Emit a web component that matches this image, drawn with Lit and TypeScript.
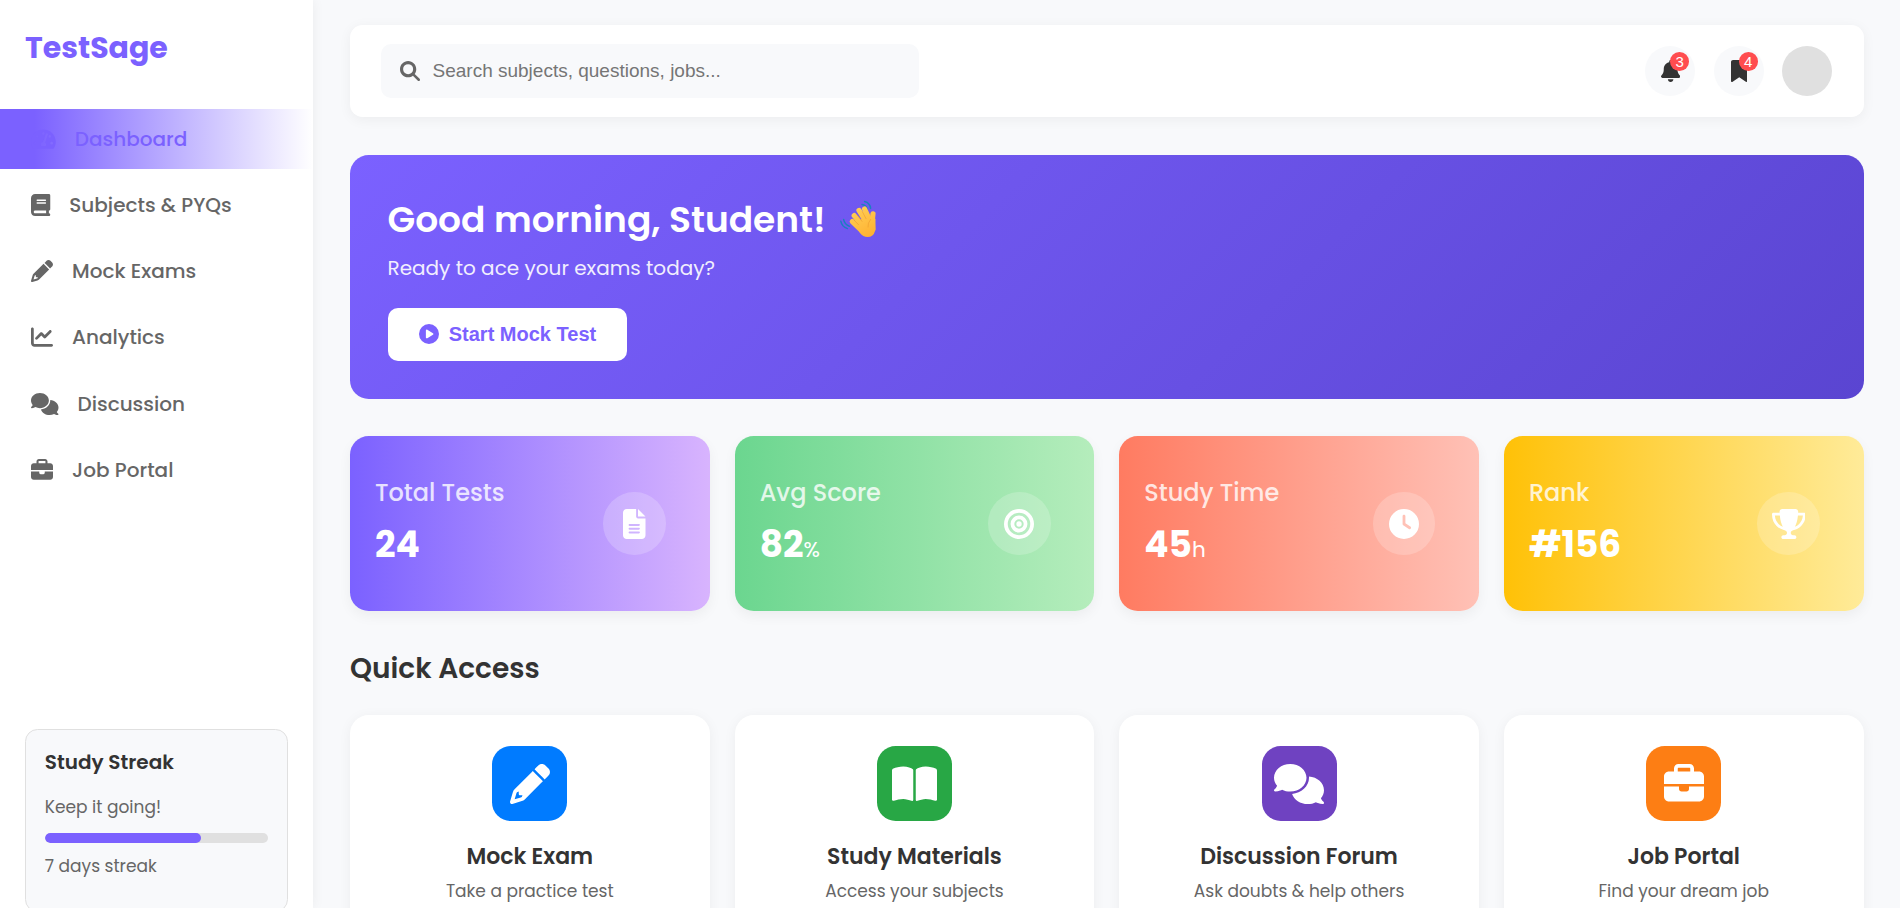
import { LitElement, html, css } from "lit";
import { customElement, property } from "lit/decorators.js";
import { classMap } from "lit/directives/class-map.js";

// Glyph outlines on a 512-unit-high grid: [width, path data]
const GLYPHS: Record<string, [number, string]> = {
  gauge: [576, "M288 32C128.94 32 0 160.94 0 320c0 52.8 14.25 102.26 39.06 144.8 5.61 9.62 16.3 15.2 27.44 15.2h443c11.14 0 21.83-5.58 27.44-15.2C561.75 422.26 576 372.8 576 320c0-159.06-128.94-288-288-288zm0 64c14.71 0 26.58 10.13 30.32 23.65-1.11 2.26-2.64 4.23-3.45 6.67l-9.22 27.67c-5.13 3.49-10.97 6.01-17.64 6.01-17.67 0-32-14.33-32-32S270.33 96 288 96zM96 384c-17.67 0-32-14.33-32-32s14.33-32 32-32 32 14.33 32 32-14.33 32-32 32zm48-160c-17.67 0-32-14.33-32-32s14.33-32 32-32 32 14.33 32 32-14.33 32-32 32zm246.77-72.41l-61.33 184C343.13 347.33 352 364.54 352 384c0 11.72-3.38 22.55-8.88 32H232.88c-5.5-9.45-8.88-20.28-8.88-32 0-33.94 26.5-61.43 59.9-63.59l61.34-184.01c4.17-12.56 17.73-19.45 30.36-15.17 12.57 4.19 19.35 17.79 15.17 30.36zm14.66 57.2l15.52-46.55c3.47-1.29 7.13-2.23 11.05-2.23 17.67 0 32 14.33 32 32s-14.33 32-32 32c-11.38-.01-20.89-6.28-26.57-15.22zM480 384c-17.67 0-32-14.33-32-32s14.33-32 32-32 32 14.33 32 32-14.33 32-32 32z"],
  book: [448, "M96 0C43 0 0 43 0 96V416c0 53 43 96 96 96H384h32c17.7 0 32-14.3 32-32s-14.3-32-32-32V384c17.7 0 32-14.3 32-32V32c0-17.7-14.3-32-32-32H384 96zm0 384H352v64H96c-17.7 0-32-14.3-32-32s14.3-32 32-32zm32-240c0-8.8 7.2-16 16-16H336c8.8 0 16 7.2 16 16s-7.2 16-16 16H144c-8.8 0-16-7.2-16-16zm16 48H336c8.8 0 16 7.2 16 16s-7.2 16-16 16H144c-8.8 0-16-7.2-16-16s7.2-16 16-16z"],
  pencil: [512, "M410.3 231l11.3-11.3-33.9-33.9-62.1-62.1L291.7 89.8l-11.3 11.3-22.6 22.6L58.6 322.9c-10.4 10.4-18 23.3-22.2 37.4L1 480.7c-2.5 8.4-.2 17.5 6.1 23.7s15.3 8.5 23.7 6.1l120.3-35.4c14.1-4.2 27-11.8 37.4-22.2L387.7 253.7 410.3 231zM160 399.4l-9.1 22.7c-4 3.1-8.5 5.4-13.3 6.9L59.4 452l23-78.1c1.4-4.9 3.8-9.4 6.9-13.3l22.7-9.1v32c0 8.8 7.2 16 16 16h32zM362.7 18.7L348.3 33.2 325.7 55.8 314.3 67.1l33.9 33.9 62.1 62.1 33.9 33.9 11.3-11.3 22.6-22.6 14.5-14.5c25-25 25-65.5 0-90.5L453.3 18.7c-25-25-65.5-25-90.5 0z"],
  chart: [512, "M64 64c0-17.7-14.3-32-32-32S0 46.3 0 64V400c0 44.2 35.8 80 80 80H480c17.7 0 32-14.3 32-32s-14.3-32-32-32H80c-8.8 0-16-7.2-16-16V64zm406.6 86.6c12.5-12.5 12.5-32.8 0-45.3s-32.8-12.5-45.3 0L320 210.7l-57.4-57.4c-12.5-12.5-32.8-12.5-45.3 0l-112 112c-12.5 12.5-12.5 32.8 0 45.3s32.8 12.5 45.3 0L240 221.3l57.4 57.4c12.5 12.5 32.8 12.5 45.3 0l128-128z"],
  comments: [640, "M208 352c114.9 0 208-78.8 208-176S322.9 0 208 0S0 78.8 0 176c0 38.6 14.7 74.3 39.6 103.4c-3.5 9.4-8.7 17.7-14.2 24.7c-4.8 6.2-9.7 11-13.3 14.3c-1.8 1.6-3.3 2.9-4.3 3.7c-.5 .4-.9 .7-1.1 .8l-.2 .2C1 327.2-1.4 334.4 .8 340.9S9.1 352 16 352c21.8 0 43.8-5.6 62.1-12.5c9.2-3.5 17.8-7.4 25.2-11.4C134.1 343.3 169.8 352 208 352zM448 176c0 112.3-99.1 196.9-216.5 207C255.8 457.4 336.4 512 432 512c38.2 0 73.9-8.7 104.7-23.9c7.5 4 16 7.9 25.2 11.4c18.3 6.9 40.3 12.5 62.1 12.5c6.9 0 13.1-4.5 15.2-11.1c2.1-6.6-.2-13.8-5.8-17.9l-.2-.2c-.2-.2-.6-.4-1.1-.8c-1-.8-2.5-2-4.3-3.7c-3.6-3.3-8.5-8.1-13.3-14.3c-5.5-7-10.7-15.4-14.2-24.7c24.9-29 39.6-64.7 39.6-103.4c0-92.8-84.9-168.9-192.6-175.5c.4 5.1 .6 10.3 .6 15.5z"],
  briefcase: [512, "M184 48H328c4.4 0 8 3.6 8 8V96H176V56c0-4.4 3.6-8 8-8zm-56 8V96H64C28.7 96 0 124.7 0 160v96H192 320 512V160c0-35.3-28.7-64-64-64H384V56c0-30.9-25.1-56-56-56H184c-30.9 0-56 25.1-56 56zM512 288H320v32c0 17.7-14.3 32-32 32H224c-17.7 0-32-14.3-32-32V288H0V416c0 35.3 28.7 64 64 64H448c35.3 0 64-28.7 64-64V288z"],
  search: [512, "M416 208c0 45.9-14.9 88.3-40 122.7L502.6 457.4c12.5 12.5 12.5 32.8 0 45.3s-32.8 12.5-45.3 0L330.7 376c-34.4 25.2-76.8 40-122.7 40C93.1 416 0 322.9 0 208S93.1 0 208 0S416 93.1 416 208zM208 336a128 128 0 1 0 0-256 128 128 0 1 0 0 256z"],
  bell: [448, "M224 0c-17.7 0-32 14.3-32 32V51.2C119 66 64 130.6 64 208v18.8c0 47-17.3 92.4-48.5 127.6l-7.4 8.3c-8.4 9.4-10.4 22.9-5.3 34.4S19.4 416 32 416H416c12.6 0 24-7.4 29.2-18.9s3.1-25-5.3-34.4l-7.4-8.3C401.3 319.2 384 273.9 384 226.8V208c0-77.4-55-142-128-156.8V32c0-17.7-14.3-32-32-32zm45.3 493.3c12-12 18.7-28.3 18.7-45.3H224 160c0 17 6.7 33.3 18.7 45.3s28.3 18.7 45.3 18.7s33.3-6.7 45.3-18.7z"],
  bookmark: [384, "M0 48V487.7C0 501.1 10.9 512 24.3 512c5 0 9.9-1.5 14-4.4L192 400 345.7 507.6c4.1 2.9 9 4.4 14 4.4c13.4 0 24.3-10.9 24.3-24.3V48c0-26.5-21.5-48-48-48H48C21.5 0 0 21.5 0 48z"],
  play: [512, "M0 256a256 256 0 1 1 512 0A256 256 0 1 1 0 256zM188.3 147.1c-7.6 4.2-12.3 12.3-12.3 20.9V344c0 8.7 4.7 16.7 12.3 20.9s16.8 4.1 24.3-.5l144-88c7.1-4.4 11.5-12.1 11.5-20.5s-4.4-16.1-11.5-20.5l-144-88c-7.4-4.5-16.7-4.7-24.3-.5z"],
  file: [384, "M64 0C28.7 0 0 28.7 0 64V448c0 35.3 28.7 64 64 64H320c35.3 0 64-28.7 64-64V160H256c-17.7 0-32-14.3-32-32V0H64zM256 0V128H384L256 0zM112 256H272c8.8 0 16 7.2 16 16s-7.2 16-16 16H112c-8.8 0-16-7.2-16-16s7.2-16 16-16zm0 64H272c8.8 0 16 7.2 16 16s-7.2 16-16 16H112c-8.8 0-16-7.2-16-16s7.2-16 16-16zm0 64H272c8.8 0 16 7.2 16 16s-7.2 16-16 16H112c-8.8 0-16-7.2-16-16s7.2-16 16-16z"],
  bullseye: [512, "M448 256A192 192 0 1 0 64 256a192 192 0 1 0 384 0zM0 256a256 256 0 1 1 512 0A256 256 0 1 1 0 256zm256 80a80 80 0 1 0 0-160 80 80 0 1 0 0 160zm0-224a144 144 0 1 1 0 288 144 144 0 1 1 0-288zM210 256a46 46 0 1 1 92 0 46 46 0 1 1 -92 0z"],
  clock: [512, "M256 0a256 256 0 1 1 0 512A256 256 0 1 1 256 0zM232 120V256c0 8 4 15.5 10.7 20l96 64c11 7.4 25.9 4.4 33.3-6.7s4.4-25.9-6.7-33.3L280 243.2V120c0-13.3-10.7-24-24-24s-24 10.7-24 24z"],
  trophy: [576, "M400 0H176c-26.5 0-48.1 21.8-47.1 48.2c.2 5.3 .4 10.6 .7 15.8H24C10.7 64 0 74.7 0 88c0 92.6 33.5 157 78.5 200.7c44.3 43.1 98.3 64.8 138.1 75.8c23.4 6.5 39.4 26 39.4 45.6c0 20.9-17 37.9-37.9 37.9H192c-17.7 0-32 14.3-32 32s14.3 32 32 32H384c17.7 0 32-14.3 32-32s-14.3-32-32-32H357.9C337 448 320 431 320 410.1c0-19.6 15.9-39.2 39.4-45.6c39.9-11 93.9-32.7 138.2-75.8C542.5 245 576 180.6 576 88c0-13.3-10.7-24-24-24H446.4c.3-5.2 .5-10.4 .7-15.8C448.1 21.8 426.5 0 400 0zM48.9 112h84.4c9.1 90.1 29.2 150.3 51.9 190.6c-24.9-11-50.8-26.5-73.2-48.3c-32-31.1-58-76-63-142.3zM464.1 254.3c-22.4 21.8-48.3 37.3-73.2 48.3c22.7-40.3 42.8-100.5 51.9-190.6h84.4c-5.1 66.3-31.1 111.2-63 142.3z"],
  bookOpen: [576, "M249.6 471.5c10.8 3.8 22.4-4.1 22.4-15.5V78.6c0-4.2-1.6-8.4-5-11C247.4 52 202.4 32 144 32C93.5 32 46.3 45.3 18.1 56.1C6.8 60.5 0 71.7 0 83.8V454.1c0 11.9 12.8 20.2 24.1 16.5C55.6 460.1 105.5 448 144 448c33.9 0 79 14 105.6 23.5zm76.8 0C353 462 398.1 448 432 448c38.5 0 88.4 12.1 119.9 22.6c11.3 3.8 24.1-4.6 24.1-16.5V83.8c0-12.1-6.8-23.3-18.1-27.6C529.7 45.3 482.5 32 432 32c-58.4 0-103.4 20-123 35.6c-3.3 2.6-5 6.8-5 11V456c0 11.4 11.7 19.3 22.4 15.5z"],
};

@customElement("ui-icon")
class UiIcon extends LitElement {
  @property() name = "book";
  static styles = css`
    :host { display: inline-flex; flex: none; line-height: 1; }
    .glyph { display: block; height: 1em; fill: currentColor; fill-rule: evenodd; }
  `;
  render() {
    const [w, d] = GLYPHS[this.name];
    return html`<svg class="glyph" viewBox="0 0 ${w} 512" aria-hidden="true"><path d=${d}></path></svg>`;
  }
}

@customElement("side-bar")
class SideBar extends LitElement {
  static styles = css`
    :host {
      display: flex; flex-direction: column; flex: none; box-sizing: border-box;
      width: 312.5px; height: 100%; padding-top: 25px;
      background: #fff; box-shadow: 0 0 12px rgba(0, 0, 0, .06); position: relative;
    }
    .brand { margin: 0 25px 38.5px; font-size: 30px; line-height: 45px; font-weight: 700; color: #7b61ff; }
    .nav { display: flex; flex-direction: column; gap: 6.25px; }
    .link {
      display: flex; align-items: center; gap: 18.75px; padding: 15px 31.25px; height: 30px;
      font-size: 20px; line-height: 30px; font-weight: 500; color: #666;
    }
    .link ui-icon { font-size: 22px; }
    .active { color: #7b61ff; background: linear-gradient(90deg, #7b61ff 11%, rgba(255, 255, 255, 0) 100%); }
    .streak {
      box-sizing: border-box; height: 183px; margin: auto 25px -4px; padding: 17.25px 18.75px;
      border: 1px solid #e0e0e0; border-radius: 12.5px; background: #f8f9fb;
      font-size: 17px; line-height: 25.5px; color: #666;
    }
    .title { font-size: 20px; line-height: 30px; font-weight: 600; color: #333; margin-bottom: 18px; }
    .bar { height: 10px; border-radius: 5px; background: #e0e0e0; margin: 12.5px 0 10.5px; overflow: hidden; }
    .fill { height: 100%; border-radius: 5px; background: #7b61ff; }
  `;
  items = [["gauge", "Dashboard"], ["book", "Subjects & PYQs"], ["pencil", "Mock Exams"],
    ["chart", "Analytics"], ["comments", "Discussion"], ["briefcase", "Job Portal"]];
  render() {
    return html`
      <div class="brand">TestSage</div>
      <nav class="nav">
        ${this.items.map(([icon, label], i) => html`
          <a class=${classMap({ link: true, active: i === 0 })}><ui-icon name=${icon}></ui-icon><span>${label}</span></a>`)}
      </nav>
      <section class="streak">
        <div class="title">Study Streak</div>
        <div>Keep it going!</div>
        <div class="bar"><div class="fill" style="width:70%"></div></div>
        <div>7 days streak</div>
      </section>`;
  }
}

@customElement("top-bar")
class TopBar extends LitElement {
  static styles = css`
    :host {
      display: flex; align-items: center; justify-content: space-between; box-sizing: border-box;
      height: 92px; padding: 0 31.25px; background: #fff; border-radius: 12.5px;
      box-shadow: 0 2.5px 12.5px rgba(0, 0, 0, .05);
      font-family: "Liberation Sans", Arial, sans-serif;
    }
    .search {
      display: flex; align-items: center; gap: 12.5px; box-sizing: border-box;
      width: 538px; height: 54px; padding: 0 18.75px; border-radius: 10px; background: #f8f9fb;
      font-size: 19px; color: #757575;
    }
    .search ui-icon { font-size: 20px; color: #666; }
    .actions { display: flex; align-items: center; gap: 18.5px; }
    .round {
      position: relative; display: grid; place-items: center; width: 50px; height: 50px;
      border-radius: 50%; background: #f8f9fb; color: #333; font-size: 22px;
    }
    .badge {
      position: absolute; top: 6.25px; right: 6.25px; width: 18.75px; height: 18.75px;
      border-radius: 50%; background: #ff4d4f; color: #fff;
      font-size: 15px; line-height: 19.5px; text-align: center;
    }
    .avatar { width: 50px; height: 50px; border-radius: 50%; background: #e0e0e0; }
  `;
  render() {
    return html`
      <div class="search"><ui-icon name="search"></ui-icon><span>Search subjects, questions, jobs...</span></div>
      <div class="actions">
        <div class="round"><ui-icon name="bell"></ui-icon><span class="badge">3</span></div>
        <div class="round"><ui-icon name="bookmark"></ui-icon><span class="badge">4</span></div>
        <div class="avatar"></div>
      </div>`;
  }
}

@customElement("welcome-banner")
class WelcomeBanner extends LitElement {
  static styles = css`
    :host {
      display: flex; flex-direction: column; align-items: flex-start; box-sizing: border-box;
      height: 244px; padding: 37.5px; border-radius: 18.75px; color: #fff;
      background: linear-gradient(135deg, #7b61ff, #5a45d1);
    }
    .title { display: flex; align-items: center; height: 54px; font-size: 36px; line-height: 54px; font-weight: 600; white-space: nowrap; }
    .wave { width: 50px; height: 38px; margin: 0 0 2px 9px; }
    .sub { margin: 6.25px 0 25px; font-size: 20px; line-height: 30px; opacity: .9; }
    .start {
      display: flex; align-items: center; gap: 10px; height: 53px; padding: 0 31.25px;
      border: 0; border-radius: 10px; background: #fff; color: #7b61ff;
      font: bold 20px "Liberation Sans", Arial, sans-serif;
    }
    .motion { fill: none; stroke: #1b7fc0; stroke-width: 1.5; stroke-linecap: round; }
    .finger { fill: none; stroke: url(#skin); stroke-width: 5.2; stroke-linecap: round; }
    .crease { fill: none; stroke: #e8952a; stroke-width: .7; stroke-linecap: round; opacity: .75; }
  `;
  render() {
    return html`
      <div class="title">Good morning, Student!
        <svg class="wave" viewBox="5 10 50 38" role="img" aria-label="👋">
          <defs><linearGradient id="skin" gradientUnits="userSpaceOnUse" x1="24" y1="18" x2="42" y2="47">
            <stop offset="0" stop-color="#ffcf57"></stop><stop offset="1" stop-color="#ffb02e"></stop>
          </linearGradient></defs>
          <path class="motion" d="M32 14.6Q36.2 15 37.4 19.6M34.6 11.6Q40 13 40.6 18.4M13.6 29.4Q14.6 34.6 19.4 36.2M10.8 31.2Q12 37 17.4 38.6"></path>
          <path fill="url(#skin)" d="M26 36L36 23.5 42 32Q45 28 45.5 29Q45.5 37 45 41Q43.5 47 37.5 47Q33 47 30 43Z"></path>
          <path class="finger" d="M22.3 31.6L32 41M24.2 25.6L34 37M29 20.4L37 33M34.6 19L40 31"></path>
          <path class="finger" d="M43 23.8Q41.5 31 43 39"></path>
          <path class="crease" d="M24.2 30.2L28.4 34.6M27.6 25.6L32 31.4M32.4 21.8L36 28.6M40.6 29.4Q37.4 33.2 38 37"></path>
        </svg>
      </div>
      <div class="sub">Ready to ace your exams today?</div>
      <button class="start"><ui-icon name="play"></ui-icon><span>Start Mock Test</span></button>`;
  }
}

@customElement("stat-card")
class StatCard extends LitElement {
  @property() label = "";
  @property() value = "";
  @property() unit = "";
  @property() icon = "";
  @property({ reflect: true }) tone = "violet";
  static styles = css`
    :host {
      display: flex; align-items: center; justify-content: space-between; box-sizing: border-box;
      height: 175px; padding: 0 43.75px 0 25px; border-radius: 18.75px; color: #fff;
      box-shadow: 0 5px 12.5px rgba(0, 0, 0, .05);
    }
    :host([tone="violet"]) { background: linear-gradient(90deg, #7b61ff, #d8b4fe); }
    :host([tone="green"]) { background: linear-gradient(90deg, #6bd68f, #b5edbc); }
    :host([tone="coral"]) { background: linear-gradient(90deg, #ff7b61, #ffc1b6); }
    :host([tone="gold"]) { background: linear-gradient(90deg, #ffc107, #ffeb99); }
    .info { padding-top: 5px; }
    .label { font-size: 24px; line-height: 36px; font-weight: 500; margin-bottom: 6.25px; opacity: .8; }
    .value { font-size: 36px; line-height: 54px; font-weight: 700; }
    .unit { font-size: 21.6px; font-weight: 400; }
    .disc {
      display: grid; place-items: center; width: 62.5px; height: 62.5px; border-radius: 50%;
      background: rgba(255, 255, 255, .2); font-size: 30px;
    }
  `;
  render() {
    return html`
      <div class="info">
        <div class="label">${this.label}</div>
        <div class="value">${this.value}<span class="unit">${this.unit}</span></div>
      </div>
      <div class="disc"><ui-icon name=${this.icon}></ui-icon></div>`;
  }
}

@customElement("quick-card")
class QuickCard extends LitElement {
  @property() heading = "";
  @property() text = "";
  @property() icon = "";
  @property({ reflect: true }) tone = "blue";
  static styles = css`
    :host {
      display: flex; flex-direction: column; align-items: center; box-sizing: border-box;
      height: 240px; padding-top: 31px; border-radius: 18.75px; background: #fff;
      box-shadow: 0 2.5px 12.5px rgba(0, 0, 0, .05);
    }
    .tile {
      display: grid; place-items: center; width: 75px; height: 75px; border-radius: 18.75px;
      margin-bottom: 18.75px; color: #fff; font-size: 40px;
    }
    :host([tone="blue"]) .tile { background: #007bff; }
    :host([tone="green"]) .tile { background: #28a745; }
    :host([tone="purple"]) .tile { background: #6f42c1; }
    :host([tone="orange"]) .tile { background: #fd7e14; }
    .heading { font-size: 22px; line-height: 33px; font-weight: 600; color: #333; margin-bottom: 6.25px; }
    .text { font-size: 17px; line-height: 25.5px; color: #666; }
  `;
  render() {
    return html`
      <div class="tile"><ui-icon name=${this.icon}></ui-icon></div>
      <div class="heading">${this.heading}</div>
      <div class="text">${this.text}</div>`;
  }
}

@customElement("app-root")
class AppRoot extends LitElement {
  static styles = css`
    :host {
      display: flex; height: 100vh; overflow: hidden; background: #f8f9fb; color: #333;
      font-family: Poppins, Inter, sans-serif;
    }
    .main { flex: 1; min-width: 0; padding: 25px 36.5px 0 37.5px; }
    welcome-banner { margin: 38px 0 37px; }
    .grid { display: grid; grid-template-columns: repeat(4, 1fr); gap: 25px; }
    .section { margin: 37.25px 0 25px; font-size: 28px; line-height: 42px; font-weight: 600; }
  `;
  stats = [
    ["Total Tests", "24", "", "file", "violet"],
    ["Avg Score", "82", "%", "bullseye", "green"],
    ["Study Time", "45", "h", "clock", "coral"],
    ["Rank", "#156", "", "trophy", "gold"],
  ];
  links = [
    ["Mock Exam", "Take a practice test", "pencil", "blue"],
    ["Study Materials", "Access your subjects", "bookOpen", "green"],
    ["Discussion Forum", "Ask doubts & help others", "comments", "purple"],
    ["Job Portal", "Find your dream job", "briefcase", "orange"],
  ];
  render() {
    return html`
      <side-bar></side-bar>
      <main class="main">
        <top-bar></top-bar>
        <welcome-banner></welcome-banner>
        <div class="grid">${this.stats.map(([label, value, unit, icon, tone]) => html`
          <stat-card .label=${label} .value=${value} .unit=${unit} .icon=${icon} .tone=${tone}></stat-card>`)}</div>
        <div class="section">Quick Access</div>
        <div class="grid">${this.links.map(([heading, text, icon, tone]) => html`
          <quick-card .heading=${heading} .text=${text} .icon=${icon} .tone=${tone}></quick-card>`)}</div>
      </main>`;
  }
}
